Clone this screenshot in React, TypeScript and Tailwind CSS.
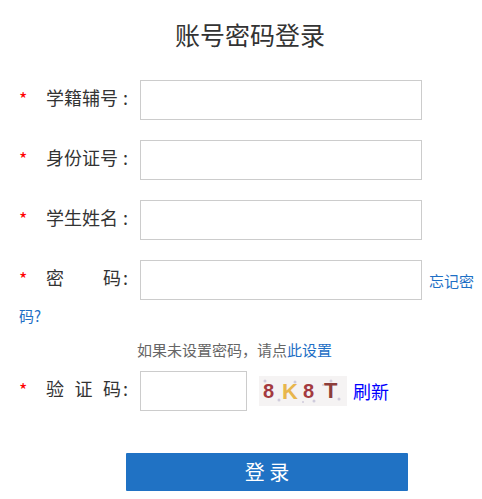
const font = "font-['Microsoft_YaHei','Noto_Sans_CJK_SC',sans-serif]"

function Label({ chars }: { chars: string[] }) {
  return (
    <span className="inline-flex w-[110px] items-center pb-[7px] text-[18px] leading-[24px] text-[#333]">
      <span className="w-[27px] pt-[2px] text-[18px] leading-[24px] text-[#f00]">*</span>
      <span className="flex w-[75px] justify-between">
        {chars.map((c, i) => (
          <span key={i}>{c}</span>
        ))}
      </span>
      <span className="ml-[2px]">:</span>
    </span>
  )
}

const fields = [
  { chars: ["学籍辅号"] },
  { chars: ["身份证号"] },
  { chars: ["学生姓名"] },
]

function Captcha() {
  return (
    <svg width="88" height="30" viewBox="0 0 88 30" className="inline-block">
      <rect width="88" height="30" fill="#f5f3f3" />
      <g fill="#cfcbdc">
        <circle cx="6" cy="5" r="1.5" />
        <circle cx="20" cy="24" r="1.5" />
        <circle cx="36" cy="6" r="1.5" />
        <circle cx="55" cy="25" r="1.5" />
        <circle cx="72" cy="5" r="1.5" />
        <circle cx="80" cy="23" r="1.5" />
        <circle cx="44" cy="26" r="1" />
        <circle cx="64" cy="9" r="1" />
      </g>
      <text x="4" y="22" fontSize="20" fontWeight="700" fontFamily="Liberation Sans" fill="#a33a3f">8</text>
      <text x="23" y="23" fontSize="22" fontWeight="700" fontFamily="Liberation Sans" fill="#e8b64c">K</text>
      <text x="44" y="22" fontSize="20" fontWeight="700" fontFamily="Liberation Sans" fill="#a33a3f">8</text>
      <text x="65" y="22" fontSize="22" fontWeight="700" fontFamily="Liberation Sans" fill="#8c3d3a">T</text>
    </svg>
  )
}

export default function App() {
  return (
    <div className={`${font} h-[499px] w-[482px] overflow-hidden bg-white pl-[19px] pr-[6px]`}>
      <h1 className="pt-[16px] pb-[28px] pl-[5px] text-center text-[25px] leading-[36px] font-normal text-[#333]">账号密码登录</h1>

      {fields.map((f) => (
        <div key={f.chars[0]} className="mb-[20px] flex items-center">
          <Label chars={f.chars} />
          <div className="ml-[11px] h-[40px] w-[282px] border border-[#ccc]" />
        </div>
      ))}

      {/* the link runs on past the edge and wraps below the field */}
      <div className="text-[15px] leading-[26px] text-[#1e6fc5]">
        <span className="inline-block align-middle">
          <span className="flex items-center">
            <Label chars={["密", "码"]} />
            <span className="ml-[11px] h-[40px] w-[282px] border border-[#ccc]" />
          </span>
        </span>
        <a className="ml-[7px] align-[-3px]">忘记密码?</a>
      </div>

      <p className="mt-[11px] pl-[118px] text-[15px] leading-[20px] text-[#666]">
        如果未设置密码，请点<a className="text-[#1e6fc5]">此设置</a>
      </p>

      <div className="mt-[11px] flex items-center">
        <Label chars={["验", "证", "码"]} />
        <div className="ml-[11px] h-[40px] w-[107px] border border-[#ccc]" />
        <span className="ml-[12px] flex items-center">
          <Captcha />
        </span>
        <a className="ml-[6px] text-[18px] text-[#00f]">刷新</a>
      </div>

      <button className="mt-[42px] ml-[107px] block h-[38px] w-[282px] rounded-[1px] bg-[#2072c4] text-[20px] text-white">
        登 录
      </button>
    </div>
  )
}
